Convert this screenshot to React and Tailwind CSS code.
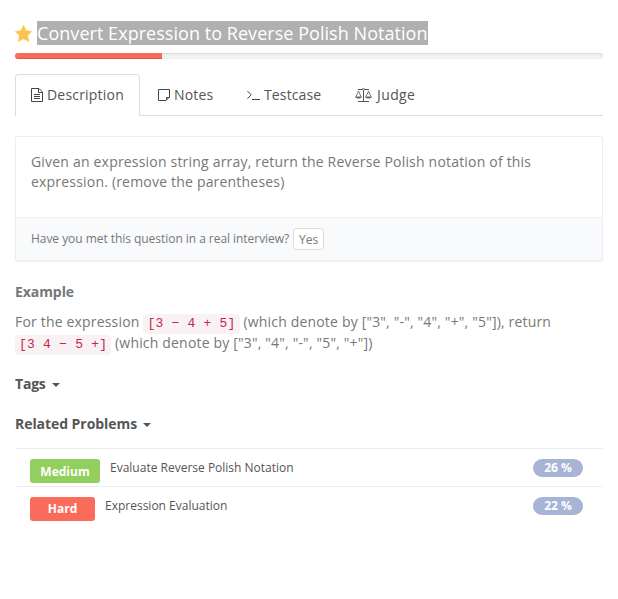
import React from "react";

function StarIcon() {
  return (
    <svg className="h-[17px] w-[17px] shrink-0" viewBox="0 0 17 17" fill="#fcc44d" stroke="#fcc44d" strokeWidth=".5" strokeLinejoin="round">
      <path d="M8.5.3 11.1 5.6 16.7 6.5 12.7 10.6 13.7 16.5 8.5 13.7 3.3 16.5 4.3 10.6 .3 6.5 5.9 5.6Z" />
    </svg>
  );
}

function FileIcon() {
  return (
    <svg className="h-[14px] w-3 shrink-0" viewBox="0 0 12 14" fill="none" stroke="#444" strokeWidth="1">
      <path d="M.5.5H8L11.5 4V13.5H.5ZM7.5.5V4.5H11.5M3 6.5H9M3 8.5H9M3 10.5H9" />
    </svg>
  );
}

function NoteIcon() {
  return (
    <svg className="h-3 w-3 shrink-0" viewBox="0 0 12 12" fill="none" stroke="#444" strokeWidth="1">
      <path d="M.5.5H11.5V8L8 11.5H.5ZM8.5 11V8.5H11.5" />
    </svg>
  );
}

function TerminalIcon() {
  return (
    <svg className="h-[10px] w-[13px] shrink-0" viewBox="0 0 13 10" fill="none" stroke="#444" strokeWidth="1">
      <path d="M.4 1 4.2 4.8.4 8.6M5 9.5H13" />
    </svg>
  );
}

function ScaleIcon() {
  return (
    <svg className="h-[14px] w-[17px] shrink-0" viewBox="0 0 17 14" fill="none" stroke="#555">
      <path d="M3 1.5H14M8.5 1.5V13M3 13.5H14" strokeWidth="1" />
      <path d="M3.5 3.2 1 8.5M3.5 3.2 6 8.5M13.5 3.2 11 8.5M13.5 3.2 16 8.5" strokeWidth=".8" />
      <path d="M0 8.5H7C6.7 11.2.3 11.2 0 8.5ZM10 8.5H17C16.7 11.2 10.3 11.2 10 8.5Z" fill="#666" stroke="none" />
      <circle cx="8.5" cy="1.3" r="1" fill="#fff" strokeWidth=".8" />
    </svg>
  );
}

function Tab({ icon, label, className }) {
  return (
    <div className={"flex h-[41px] items-center text-[14px] text-[#555] " + className}>
      {icon}
      <span>{label}</span>
    </div>
  );
}

function Code({ children }) {
  return (
    <code className="rounded bg-[#f9f2f4] px-[4px] pb-[3px] pt-[2px] font-['Liberation_Mono',monospace] text-[13px] leading-[14px] tracking-[0.22px] text-[#c7254e]">
      {children}
    </code>
  );
}

function Caret() {
  return <span className="ml-1.5 mt-0.5 border-x-4 border-t-4 border-x-transparent border-t-[#555]" />;
}

function Problem({ level, levelClass, title, rate }) {
  return (
    <li className="flex h-[38px] items-start border-t border-[#e9edf3] pl-[15px] pr-5 pt-[10px]">
      <span className={"flex h-6 items-center justify-center rounded-[3px] text-[12px] font-bold text-white " + levelClass}>
        {level}
      </span>
      <span className="ml-[10px] text-[12px] leading-[18px] text-[#555]">{title}</span>
      <span className="ml-auto flex h-[18px] w-[50px] items-center justify-center rounded-full bg-[#a7b4d6] text-[12px] font-bold text-white">
        {rate}
      </span>
    </li>
  );
}

export default function App() {
  return (
    <main className="min-h-[599px] bg-white px-[15px] pt-[21px] font-['Open_Sans',sans-serif] text-[14px] text-[#777]">
      <h1 className="flex h-6 items-center text-[18px] leading-6 text-white">
        <StarIcon />
        <span className="ml-[5px] whitespace-nowrap bg-[#b0b0b0] tracking-[0.045px]">Convert Expression to Reverse Polish Notation</span>
      </h1>

      <div className="mt-2 h-1.5 w-[588px] overflow-hidden rounded-[3px] bg-[#f2f2f2] shadow-[inset_0_1px_2px_rgba(0,0,0,0.1)]">
        <div className="h-full w-[147px] bg-[#fb6b5b] shadow-[inset_0_-1px_0_rgba(0,0,0,0.15)]" />
      </div>

      <nav className="mt-[15px] flex h-[42px] w-[588px] border-b border-[#ddd]">
        <Tab icon={<FileIcon />} label="Description" className="h-[42px] w-[125px] gap-1 rounded-t border border-b-0 border-[#ddd] bg-white pb-0.5 pl-[15px] tracking-[0.2px]" />
        <Tab icon={<NoteIcon />} label="Notes" className="w-[89px] gap-1 pl-[18px] tracking-[0.15px]" />
        <Tab icon={<TerminalIcon />} label="Testcase" className="w-[109px] gap-1 pl-[18px] tracking-[0.13px]" />
        <Tab icon={<ScaleIcon />} label="Judge" className="gap-[5px] pl-[17px] tracking-[0.4px]" />
      </nav>

      <section className="mt-5 w-[588px] rounded-[2px] border border-[#eaeef5] shadow-[0_1px_1px_rgba(0,0,0,0.05)]">
        <p className="h-20 px-[15px] pt-[15px] leading-5 tracking-[0.195px]">
          Given an expression string array, return the Reverse Polish notation of this
          <br />
          expression. (remove the parentheses)
        </p>
        <div className="flex h-[43px] items-start border-t border-[#eaeef5] bg-[#f9fafc] px-[15px] pt-[10px] text-[12px]">
          <span className="leading-[22px] tracking-[-0.045px]">Have you met this question in a real interview?</span>
          <button className="ml-1 h-[22px] w-[31px] rounded-[3px] border border-[#ddd] bg-white text-[12px] leading-[21px]">Yes</button>
        </div>
      </section>

      <h2 className="mt-[21px] leading-5 font-bold tracking-[-0.07px]">Example</h2>
      <p className="mt-[9px] h-[43px] whitespace-nowrap leading-[21px] tracking-[0.18px]">
        For the expression <Code>[3 − 4 + 5]</Code> (which denote by ["3", "-", "4", "+", "5"]), return
        <br />
        <Code>[3 4 − 5 +]</Code> (which denote by ["3", "4", "-", "5", "+"])
      </p>

      <h2 className="mt-5 flex items-center leading-5 font-bold tracking-[-0.2px] text-[#555]">
        Tags <Caret />
      </h2>
      <h2 className="mt-5 flex items-center leading-5 font-bold tracking-[-0.06px] text-[#555]">
        Related Problems <Caret />
      </h2>

      <ul className="mt-[14px] w-[588px]">
        <Problem level="Medium" levelClass="w-[70px] bg-[#92cf5c] pt-px" title="Evaluate Reverse Polish Notation" rate="26 %" />
        <Problem level="Hard" levelClass="w-[65px] bg-[#fb6b5b]" title="Expression Evaluation" rate="22 %" />
      </ul>
    </main>
  );
}
